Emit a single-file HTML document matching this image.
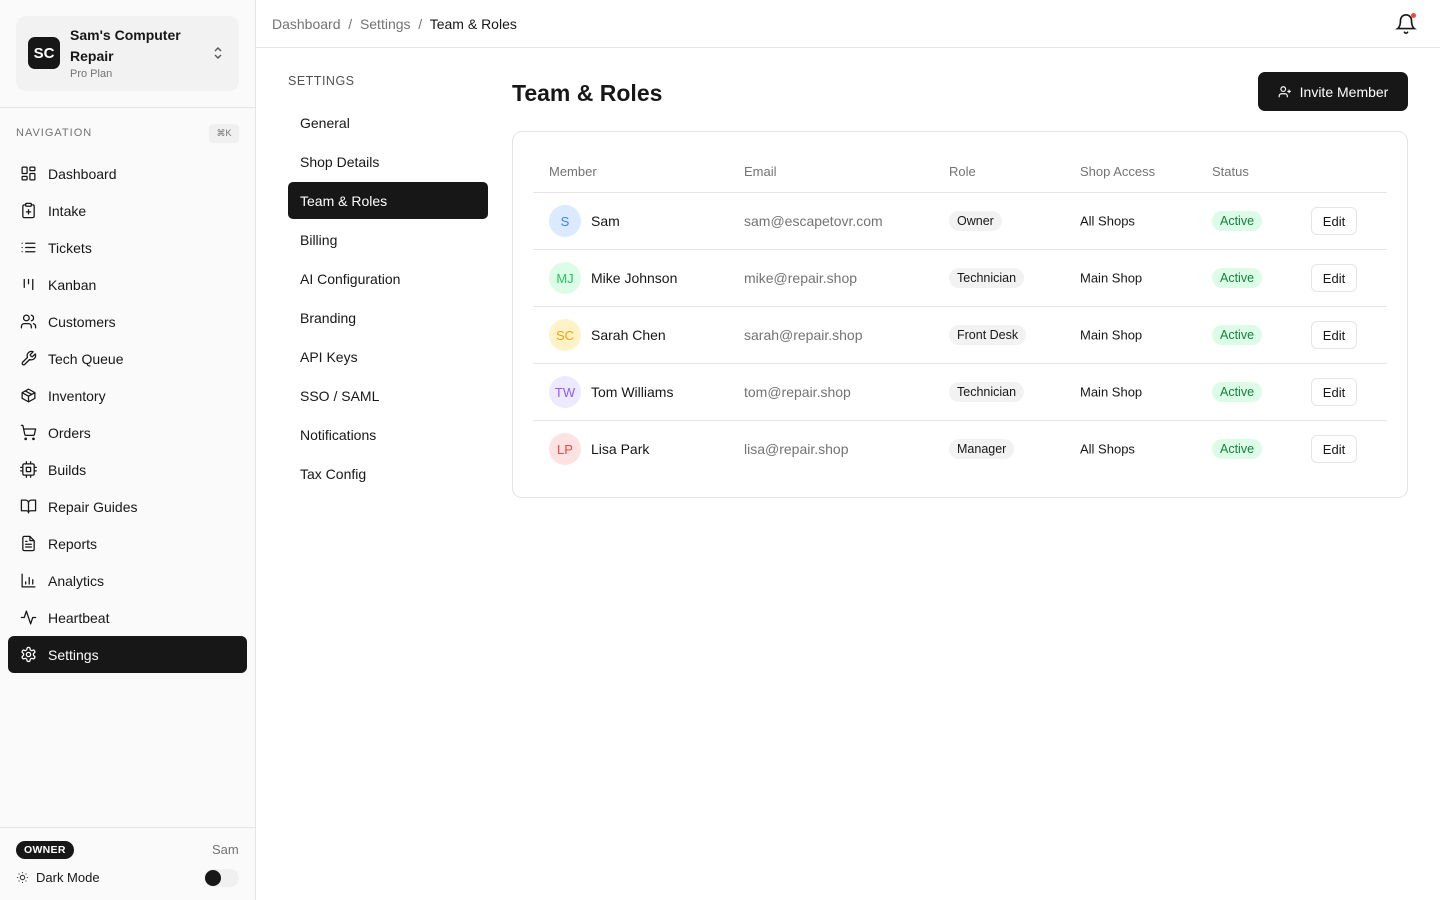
<!DOCTYPE html>
<html><head><meta charset="utf-8"><style>
*{box-sizing:border-box;margin:0;padding:0}
body{width:1440px;height:900px;font-family:"Liberation Sans",sans-serif;color:#171717;background:#fff;position:relative;overflow:hidden;font-size:14px}
.side{position:absolute;left:0;top:0;width:256px;height:900px;background:#fafafa;border-right:1px solid #e5e5e5}
.org{position:absolute;left:16px;top:16px;width:223px;height:75px;background:#f2f2f2;border-radius:10px}
.logo{position:absolute;left:12px;top:21px;width:32px;height:32px;background:#171717;border-radius:7px;color:#fff;font-weight:bold;font-size:15px;display:flex;align-items:center;justify-content:center}
.abs{position:absolute}
.nav{position:absolute;left:8px;width:239px;height:37px;display:flex;align-items:center;padding-left:12px;font-size:14px;border-radius:6px}
.nav svg{width:17px;height:17px;margin-right:11px;fill:none;stroke:#171717;stroke-width:1.8;stroke-linecap:round;stroke-linejoin:round}
.nav.act{background:#171717;color:#fff}.nav.act svg{stroke:#fff}
.sn{position:absolute;left:288px;width:200px;height:37px;padding-left:12px;display:flex;align-items:center;font-size:14px;border-radius:5px}
.sn.act{background:#171717;color:#fff}
.card{position:absolute;left:512px;top:131px;width:896px;height:367px;border:1px solid #e5e5e5;border-radius:10px}
.th{position:absolute;top:164px;font-size:13px;color:#737373}
.row{position:absolute;left:533px;width:854px;height:57px;border-top:1px solid #e5e5e5}
.row>*{position:absolute;top:50%;transform:translateY(-50%)}
.av{left:16px;width:32px;height:32px;border-radius:50%;display:flex;align-items:center;justify-content:center;font-size:13px}
.nm{left:58px;font-size:14px}
.em{left:211px;color:#737373;font-size:14px}
.role{left:416px;background:#f2f2f2;border-radius:10px;padding:3px 8px;font-size:12.5px}
.acc{left:547px;font-size:13px}
.st{left:679px;background:#dcfce7;color:#15803d;border-radius:10px;padding:3px 8px;font-size:12.5px}
.ed{left:778px;border:1px solid #e5e5e5;border-radius:6px;width:46px;height:28px;display:flex;align-items:center;justify-content:center;font-size:13px}
</style></head><body>
<div class="side">
<div class="org"><div class="logo">SC</div>
<div class="abs" style="left:54px;top:9px;font-weight:bold;font-size:14px;line-height:21px;width:140px">Sam's Computer Repair</div>
<div class="abs" style="left:54px;top:52px;font-size:11px;color:#737373">Pro Plan</div>
<svg class="abs" style="left:196px;top:29px" width="12" height="16" viewBox="0 0 12 16" fill="none" stroke="#555" stroke-width="1.4"><path d="M3 6l3-3 3 3M3 10l3 3 3-3"/></svg></div>
<div class="abs" style="left:0;top:107px;width:255px;border-top:1px solid #e5e5e5"></div>
<div class="abs" style="left:16px;top:127px;font-size:11px;letter-spacing:1px;color:#737373">NAVIGATION</div>
<div class="abs" style="left:209px;top:124px;width:30px;height:19px;background:#f0f0f0;border-radius:4px;font-size:9px;color:#737373;text-align:center;line-height:19px">⌘K</div>
<div class="nav" style="top:155px"><svg viewBox="0 0 24 24"><rect x="3" y="3" width="7" height="9" rx="1"/><rect x="14" y="3" width="7" height="5" rx="1"/><rect x="14" y="12" width="7" height="9" rx="1"/><rect x="3" y="16" width="7" height="5" rx="1"/></svg>Dashboard</div>
<div class="nav" style="top:192px"><svg viewBox="0 0 24 24"><rect x="8" y="2" width="8" height="4" rx="1"/><path d="M16 4h2a2 2 0 0 1 2 2v14a2 2 0 0 1-2 2H6a2 2 0 0 1-2-2V6a2 2 0 0 1 2-2h2M9 14h6M12 11v6"/></svg>Intake</div>
<div class="nav" style="top:229px"><svg viewBox="0 0 24 24"><path d="M8 6h13M8 12h13M8 18h13M3 6h.01M3 12h.01M3 18h.01"/></svg>Tickets</div>
<div class="nav" style="top:266px"><svg viewBox="0 0 24 24"><path d="M6 5v11M12 5v6M18 5v14"/></svg>Kanban</div>
<div class="nav" style="top:303px"><svg viewBox="0 0 24 24"><circle cx="9" cy="7" r="4"/><path d="M16 21v-2a4 4 0 0 0-4-4H6a4 4 0 0 0-4 4v2M16 3.1a4 4 0 0 1 0 7.8M22 21v-2a4 4 0 0 0-3-3.9"/></svg>Customers</div>
<div class="nav" style="top:340px"><svg viewBox="0 0 24 24"><path d="M14.7 6.3a1 1 0 0 0 0 1.4l1.6 1.6a1 1 0 0 0 1.4 0l3.8-3.8a6 6 0 0 1-7.9 7.9l-6.9 6.9a2.1 2.1 0 0 1-3-3l6.9-6.9a6 6 0 0 1 7.9-7.9z"/></svg>Tech Queue</div>
<div class="nav" style="top:377px"><svg viewBox="0 0 24 24"><path d="M21 8l-9-5-9 5v8l9 5 9-5zM3 8l9 5 9-5M12 13v8M7.5 5.5l9 5"/></svg>Inventory</div>
<div class="nav" style="top:414px"><svg viewBox="0 0 24 24"><circle cx="8" cy="21" r="1"/><circle cx="19" cy="21" r="1"/><path d="M2 2h2l2.7 12.4a2 2 0 0 0 2 1.6h9.7a2 2 0 0 0 2-1.6L22 7H5.1"/></svg>Orders</div>
<div class="nav" style="top:451px"><svg viewBox="0 0 24 24"><rect x="4" y="4" width="16" height="16" rx="2"/><rect x="9" y="9" width="6" height="6"/><path d="M9 1v3M15 1v3M9 20v3M15 20v3M20 9h3M20 14h3M1 9h3M1 14h3"/></svg>Builds</div>
<div class="nav" style="top:488px"><svg viewBox="0 0 24 24"><path d="M2 3h6a4 4 0 0 1 4 4v14a3 3 0 0 0-3-3H2zM22 3h-6a4 4 0 0 0-4 4v14a3 3 0 0 1 3-3h7z"/></svg>Repair Guides</div>
<div class="nav" style="top:525px"><svg viewBox="0 0 24 24"><path d="M14 2H6a2 2 0 0 0-2 2v16a2 2 0 0 0 2 2h12a2 2 0 0 0 2-2V8zM14 2v6h6M16 13H8M16 17H8M10 9H8"/></svg>Reports</div>
<div class="nav" style="top:562px"><svg viewBox="0 0 24 24"><path d="M3 3v18h18M8 17v-3M13 17V8M18 17v-6"/></svg>Analytics</div>
<div class="nav" style="top:599px"><svg viewBox="0 0 24 24"><path d="M22 12h-4l-3 9L9 3l-3 9H2"/></svg>Heartbeat</div>
<div class="nav act" style="top:636px"><svg viewBox="0 0 24 24"><circle cx="12" cy="12" r="3"/><path d="M12.2 2h-.4a2 2 0 0 0-2 2v.2a2 2 0 0 1-1 1.7l-.4.3a2 2 0 0 1-2 0l-.2-.1a2 2 0 0 0-2.7.7l-.2.4a2 2 0 0 0 .7 2.7l.2.1a2 2 0 0 1 1 1.7v.5a2 2 0 0 1-1 1.7l-.2.1a2 2 0 0 0-.7 2.7l.2.4a2 2 0 0 0 2.7.7l.2-.1a2 2 0 0 1 2 0l.4.3a2 2 0 0 1 1 1.7v.2a2 2 0 0 0 2 2h.4a2 2 0 0 0 2-2v-.2a2 2 0 0 1 1-1.7l.4-.3a2 2 0 0 1 2 0l.2.1a2 2 0 0 0 2.7-.7l.2-.4a2 2 0 0 0-.7-2.7l-.2-.1a2 2 0 0 1-1-1.7v-.5a2 2 0 0 1 1-1.7l.2-.1a2 2 0 0 0 .7-2.7l-.2-.4a2 2 0 0 0-2.7-.7l-.2.1a2 2 0 0 1-2 0l-.4-.3a2 2 0 0 1-1-1.7V4a2 2 0 0 0-2-2z"/></svg>Settings</div>
<div class="abs" style="left:0;top:827px;width:255px;border-top:1px solid #e5e5e5"></div>
<div class="abs" style="left:16px;top:841px;background:#171717;color:#fff;font-size:10.5px;font-weight:bold;letter-spacing:.3px;border-radius:10px;padding:3px 8px">OWNER</div>
<div class="abs" style="left:212px;top:842px;font-size:13px;color:#737373">Sam</div>
<svg class="abs" style="left:16px;top:871px" width="13" height="13" viewBox="0 0 24 24" fill="none" stroke="#333" stroke-width="2"><circle cx="12" cy="12" r="4"/><path d="M12 2v2M12 20v2M4.9 4.9l1.4 1.4M17.7 17.7l1.4 1.4M2 12h2M20 12h2M4.9 19.1l1.4-1.4M17.7 6.3l1.4-1.4"/></svg>
<div class="abs" style="left:36px;top:870px;font-size:13px">Dark Mode</div>
<div class="abs" style="left:204px;top:869px;width:35px;height:18px;background:#f0f0f0;border-radius:9px"><div style="position:absolute;left:1px;top:1px;width:16px;height:16px;border-radius:50%;background:#171717"></div></div>
</div>
<div class="abs" style="left:256px;top:47px;width:1184px;border-top:1px solid #e5e5e5"></div>
<div class="abs" style="left:272px;top:16px;font-size:14px;color:#737373">Dashboard &nbsp;/&nbsp; Settings &nbsp;/&nbsp; <span style="color:#171717">Team &amp; Roles</span></div>
<svg class="abs" style="left:1395px;top:13px" width="22" height="22" viewBox="0 0 24 24" fill="none" stroke="#171717" stroke-width="1.8" stroke-linecap="round"><path d="M6 8a6 6 0 0 1 12 0c0 7 3 9 3 9H3s3-2 3-9M10.3 21a1.9 1.9 0 0 0 3.4 0"/></svg>
<div class="abs" style="left:1411px;top:13px;width:5px;height:5px;border-radius:50%;background:#ef4444"></div>
<div class="abs" style="left:288px;top:74px;font-size:12.5px;color:#525252;letter-spacing:.5px">SETTINGS</div>
<div class="sn" style="top:104px">General</div>
<div class="sn" style="top:143px">Shop Details</div>
<div class="sn act" style="top:182px">Team &amp; Roles</div>
<div class="sn" style="top:221px">Billing</div>
<div class="sn" style="top:260px">AI Configuration</div>
<div class="sn" style="top:299px">Branding</div>
<div class="sn" style="top:338px">API Keys</div>
<div class="sn" style="top:377px">SSO / SAML</div>
<div class="sn" style="top:416px">Notifications</div>
<div class="sn" style="top:455px">Tax Config</div>
<div class="abs" style="left:512px;top:80px;font-size:23px;font-weight:bold">Team &amp; Roles</div>
<div class="abs" style="left:1258px;top:72px;width:150px;height:39px;background:#171717;border-radius:7px;color:#fff;font-size:14px;display:flex;align-items:center;justify-content:center"><svg width="14" height="14" viewBox="0 0 24 24" fill="none" stroke="#fff" stroke-width="2" style="margin-right:8px"><circle cx="9" cy="7" r="4"/><path d="M16 21v-2a4 4 0 0 0-4-4H6a4 4 0 0 0-4 4v2M19 8v6M22 11h-6"/></svg>Invite Member</div>
<div class="card"></div>
<div class="th" style="left:549px">Member</div><div class="th" style="left:744px">Email</div><div class="th" style="left:949px">Role</div><div class="th" style="left:1080px">Shop Access</div><div class="th" style="left:1212px">Status</div>
<div class="row" style="top:192px"><div class="av" style="background:#dbeafe;color:#3b82f6">S</div><div class="nm">Sam</div><div class="em">sam@escapetovr.com</div><div class="role">Owner</div><div class="acc">All Shops</div><div class="st">Active</div><div class="ed">Edit</div></div>
<div class="row" style="top:249px"><div class="av" style="background:#dcfce7;color:#22c55e">MJ</div><div class="nm">Mike Johnson</div><div class="em">mike@repair.shop</div><div class="role">Technician</div><div class="acc">Main Shop</div><div class="st">Active</div><div class="ed">Edit</div></div>
<div class="row" style="top:306px"><div class="av" style="background:#fef3c7;color:#f59e0b">SC</div><div class="nm">Sarah Chen</div><div class="em">sarah@repair.shop</div><div class="role">Front Desk</div><div class="acc">Main Shop</div><div class="st">Active</div><div class="ed">Edit</div></div>
<div class="row" style="top:363px"><div class="av" style="background:#ede9fe;color:#8b5cf6">TW</div><div class="nm">Tom Williams</div><div class="em">tom@repair.shop</div><div class="role">Technician</div><div class="acc">Main Shop</div><div class="st">Active</div><div class="ed">Edit</div></div>
<div class="row" style="top:420px"><div class="av" style="background:#fee2e2;color:#ef4444">LP</div><div class="nm">Lisa Park</div><div class="em">lisa@repair.shop</div><div class="role">Manager</div><div class="acc">All Shops</div><div class="st">Active</div><div class="ed">Edit</div></div>
</body></html>
